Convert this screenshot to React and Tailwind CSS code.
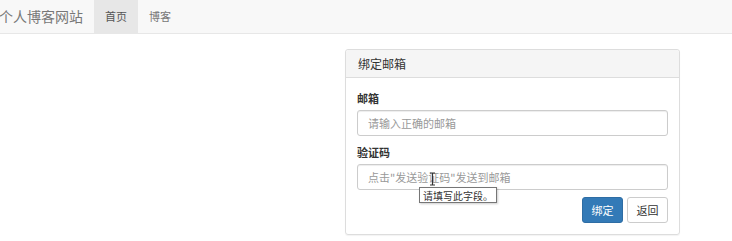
import React from 'react';

const font = { fontFamily: '"Noto Sans CJK SC", "Noto Sans", sans-serif' };

const Field = ({ label, placeholder, children }) => (
  <div>
    <label className="block h-[16px] leading-[16px] text-[11px] font-bold text-[#333] mb-[4px]">{label}</label>
    <div className="relative">
      <input
        className="block w-full h-[26px] px-[10px] text-[11px] text-[#555] bg-white border border-[#ccc] rounded-[3px] shadow-[inset_0_1px_1px_rgba(0,0,0,0.075)] outline-none placeholder:text-[#999]"
        placeholder={placeholder}
      />
      {children}
    </div>
  </div>
);

export default function App() {
  return (
    <div className="w-[732px] h-[241px] bg-white overflow-hidden" style={font}>
      {/* navbar */}
      <div className="h-[34px] bg-[#f8f8f8] border-b border-[#e7e7e7] flex items-stretch">
        <div className="flex items-center text-[14px] text-[#777] pr-[11px] -ml-[1px]">个人博客网站</div>
        <div className="flex items-center px-[11px] bg-[#e7e7e7] text-[11px] text-[#555]">首页</div>
        <div className="flex items-center px-[11px] text-[11px] text-[#777]">博客</div>
      </div>

      {/* panel */}
      <div className="ml-[345px] mt-[15px] w-[335px] border border-[#ddd] rounded-[3px] shadow-[0_1px_1px_rgba(0,0,0,0.05)]">
        <div className="h-[28px] px-[12px] flex items-center bg-[#f5f5f5] border-b border-[#ddd] text-[12px] text-[#333] rounded-t-[3px]">
          绑定邮箱
        </div>
        <div className="px-[11px] pt-[12px] pb-[11px]">
          <Field label="邮箱" placeholder="请输入正确的邮箱" />
          <div className="h-[8px]" />
          <Field label="验证码" placeholder={'点击"发送验证码"发送到邮箱'}>
            <svg className="absolute left-[72px] top-[8px]" width="7" height="14" viewBox="0 0 7 14">
              <path d="M1 1h5M3.5 1v12M1 13h5" stroke="#333" strokeWidth="1.2" fill="none" />
            </svg>
            <div className="absolute left-[62px] top-[23px] h-[16px] px-[3px] flex items-center bg-white border border-[#767676] text-[10px] text-[#333] whitespace-nowrap shadow-[1px_1px_2px_rgba(0,0,0,0.2)]">
              请填写此字段。
            </div>
          </Field>
          <div className="flex justify-end gap-[4px] mt-[7px]">
            <button className="w-[41px] h-[26px] text-[11px] text-white bg-[#337ab7] border border-[#2e6da4] rounded-[3px]">绑定</button>
            <button className="w-[41px] h-[26px] text-[11px] text-[#333] bg-white border border-[#ccc] rounded-[3px]">返回</button>
          </div>
        </div>
      </div>
    </div>
  );
}
